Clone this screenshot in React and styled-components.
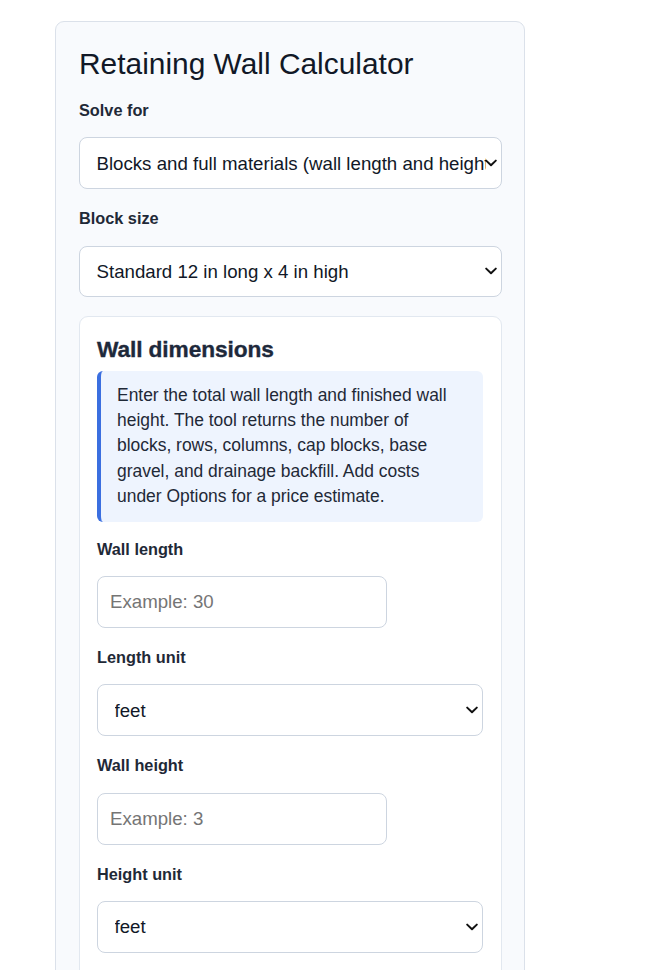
import React from "react";
import styled, { createGlobalStyle } from "styled-components";

const Global = createGlobalStyle`
  html, body { margin: 0; padding: 0; background: #ffffff; }
  body { font-family: "Liberation Sans", Arial, sans-serif; }
  * { box-sizing: border-box; }
`;

const Page = styled.div`
  padding: 21px 0 0 55px;
`;

const Card = styled.div`
  width: 470px;
  background: #f8fafd;
  border: 1px solid #dbe1ea;
  border-radius: 9px;
  padding: 24px 22px 24px 23px;
`;

const Title = styled.h1`
  margin: 1px 0 18.5px;
  font-size: 29.9px;
  font-weight: 400;
  line-height: 34.3px;
  color: #111827;
`;

const Field = styled.div`
  display: flex;
  flex-direction: column;
  margin-bottom: ${(p) => (p.$last ? "18px" : "19px")};
`;

const Label = styled.label`
  font-size: 16.3px;
  font-weight: 700;
  line-height: 21.5px;
  margin-bottom: 16px;
  color: #1f2937;
`;

const SelectWrap = styled.div`
  position: relative;
  width: 100%;
`;

const Select = styled.select`
  appearance: none;
  -webkit-appearance: none;
  width: 100%;
  height: 51.8px;
  border: 1px solid #cdd5e0;
  border-radius: 8px;
  background: #ffffff;
  padding: 0 15px 0 16.5px;
  font-family: "Liberation Sans", Arial, sans-serif;
  font-size: 18.67px;
  color: #111827;
  outline: none;
`;

const Chevron = styled.svg`
  position: absolute;
  right: 5px;
  top: 50%;
  transform: translateY(-50%);
  width: 12px;
  height: 8px;
  pointer-events: none;
`;

const Input = styled.input`
  width: 290px;
  height: 51.8px;
  border: 1px solid #cdd5e0;
  border-radius: 8px;
  background: #ffffff;
  padding: 0 12px;
  font-family: "Liberation Sans", Arial, sans-serif;
  font-size: 18.67px;
  color: #111827;
  outline: none;
  &::placeholder { color: #757575; }
`;

const Section = styled.div`
  background: #ffffff;
  border: 1px solid #e2e8f0;
  border-radius: 9px;
  padding: 18px 18px 18px 17px;
`;

const SectionTitle = styled.h2`
  margin: 1.5px 0 8.2px;
  font-size: 22.7px;
  font-weight: 700;
  line-height: 25.7px;
  color: #1e293b;
  letter-spacing: -0.1px;
  -webkit-text-stroke: 0.35px #1e293b;
`;

const Info = styled.p`
  margin: 0 0 16.7px;
  background: #eef4fe;
  border-left: 4px solid #3b6fe0;
  border-radius: 6px;
  padding: 12px 16px 12.5px 16px;
  font-size: 17.45px;
  line-height: 25.35px;
  color: #1f2937;
`;

const Arrow = () => (
  <Chevron viewBox="0 0 12 8">
    <path d="M1.2 1.6 L6 6.2 L10.8 1.6" fill="none" stroke="#111" strokeWidth="2" strokeLinecap="round" strokeLinejoin="round" />
  </Chevron>
);

const SelectField = ({ label, options, last }) => (
  <Field $last={last}>
    <Label>{label}</Label>
    <SelectWrap>
      <Select defaultValue={options[0]}>
        {options.map((o) => (
          <option key={o}>{o}</option>
        ))}
      </Select>
      <Arrow />
    </SelectWrap>
  </Field>
);

const InputField = ({ label, placeholder }) => (
  <Field>
    <Label>{label}</Label>
    <Input type="text" placeholder={placeholder} />
  </Field>
);

export default function App() {
  return (
    <>
      <Global />
      <Page>
        <Card>
          <Title>Retaining Wall Calculator</Title>
          <SelectField
            label="Solve for"
            options={["Blocks and full materials (wall length and height)", "Wall length from block count"]}
          />
          <SelectField
            label="Block size"
            options={["Standard 12 in long x 4 in high", "Large 16 in long x 6 in high"]}
          />
          <Section>
            <SectionTitle>Wall dimensions</SectionTitle>
            <Info>
              Enter the total wall length and finished wall height. The tool returns the number of
              blocks, rows, columns, cap blocks, base gravel, and drainage backfill. Add costs under
              Options for a price estimate.
            </Info>
            <InputField label="Wall length" placeholder="Example: 30" />
            <SelectField label="Length unit" options={["feet", "meters", "yards"]} />
            <InputField label="Wall height" placeholder="Example: 3" />
            <SelectField label="Height unit" options={["feet", "meters", "inches"]} last />
          </Section>
        </Card>
      </Page>
    </>
  );
}
